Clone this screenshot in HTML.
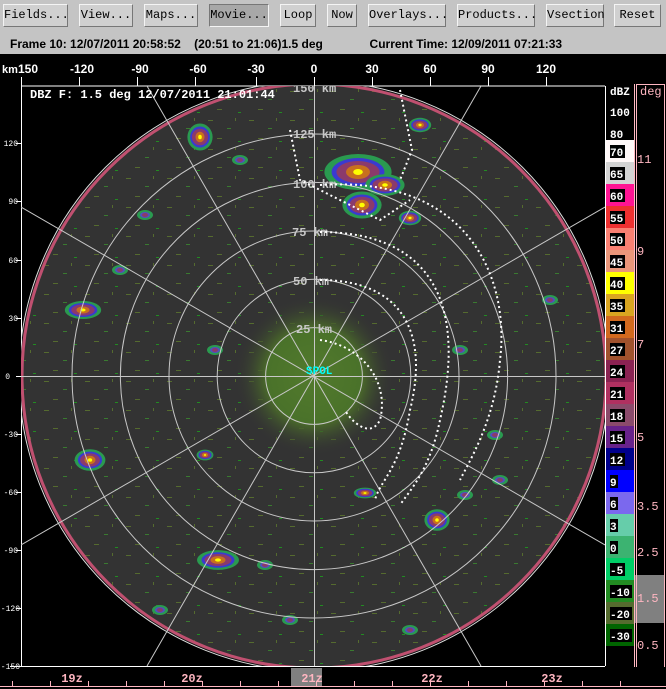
<!DOCTYPE html>
<html><head><meta charset="utf-8"><style>
body{margin:0;width:666px;height:689px;overflow:hidden;background:#000;font-family:"Liberation Sans",sans-serif}
#top{position:absolute;left:0;top:0;width:666px;height:54px;background:#c4c4c4}
.b{position:absolute;top:4px;height:23px;background:#d0d0d0;border:1px solid #f4f4f4;border-right-color:#777;border-bottom-color:#777;box-sizing:border-box;font:12px "Liberation Mono",monospace;line-height:21px;text-align:center;color:#000}
.b.p{background:#a8a8a8;border-color:#777 #f4f4f4 #f4f4f4 #777}
#info{position:absolute;top:37px;left:10px;font:bold 12px "Liberation Sans",sans-serif;white-space:pre;color:#000}
svg{position:absolute;left:0;top:0}
</style></head><body>
<div id="top">
<div class="b" style="left:3px;width:65px">Fields...</div>
<div class="b" style="left:79px;width:54px">View...</div>
<div class="b" style="left:144px;width:54px">Maps...</div>
<div class="b p" style="left:209px;width:60px">Movie...</div>
<div class="b" style="left:280px;width:36px">Loop</div>
<div class="b" style="left:327px;width:30px">Now</div>
<div class="b" style="left:368px;width:78px">Overlays...</div>
<div class="b" style="left:457px;width:78px">Products...</div>
<div class="b" style="left:546px;width:58px">Vsection</div>
<div class="b" style="left:614px;width:47px">Reset</div>
<div id="info">Frame 10: 12/07/2011 20:58:52    (20:51 to 21:06)1.5 deg              Current Time: 12/09/2011 07:21:33</div>
</div>
<svg width="666" height="689" viewBox="0 0 666 689" style="top:0">
<defs>
<clipPath id="fr"><rect x="21" y="86" width="584" height="580"/></clipPath>
<clipPath id="cc"><circle cx="314" cy="376" r="292"/></clipPath>
<pattern id="sp" width="41" height="29" patternUnits="userSpaceOnUse">
<rect x="3" y="4" width="5" height="1" fill="#556b2f"/><rect x="22" y="12" width="4" height="1" fill="#3a7a30"/><rect x="12" y="22" width="5" height="1" fill="#556b2f"/><rect x="33" y="25" width="3" height="1" fill="#228b22"/><rect x="30" y="2" width="1" height="3" fill="#556b2f"/>
</pattern>
<radialGradient id="cg"><stop offset="0" stop-color="#5a7a30"/><stop offset="0.6" stop-color="#4a6a2a"/><stop offset="1" stop-color="#333" stop-opacity="0"/></radialGradient>
<g id="bl">
<ellipse rx="14" ry="9" fill="#2a9a50"/>
<ellipse rx="11" ry="7" fill="#3a3ad0"/>
<ellipse rx="9" ry="5.5" fill="#8b3a6b"/>
<ellipse rx="5" ry="3.5" fill="#c8701e"/>
<ellipse rx="2" ry="1.5" fill="#ffff00"/>
</g>
<g id="sm">
<ellipse rx="8" ry="5" fill="#2a9a50"/>
<ellipse rx="5" ry="3" fill="#5050c0"/>
<ellipse rx="3" ry="2" fill="#8b3a6b"/>
</g>
</defs>
<g fill="#fff" font-family="Liberation Sans" font-weight="bold" font-size="12" text-anchor="middle">
<text x="10" y="73" font-size="11">km</text>
<text x="28" y="73">150</text><text x="82" y="73">-120</text><text x="140" y="73">-90</text><text x="198" y="73">-60</text><text x="256" y="73">-30</text><text x="314" y="73">0</text><text x="372" y="73">30</text><text x="430" y="73">60</text><text x="488" y="73">90</text><text x="546" y="73">120</text>
</g>
<g stroke="#fff" stroke-width="1">
<line x1="21" y1="86" x2="605" y2="86"/><line x1="21.5" y1="77" x2="21.5" y2="666"/><line x1="605.5" y1="86" x2="605.5" y2="666"/><line x1="10" y1="666.5" x2="605" y2="666.5"/>
<line x1="79.5" y1="77" x2="79.5" y2="86"/><line x1="137.5" y1="77" x2="137.5" y2="86"/><line x1="195.5" y1="77" x2="195.5" y2="86"/><line x1="256.5" y1="77" x2="256.5" y2="86"/><line x1="314.5" y1="77" x2="314.5" y2="86"/><line x1="372.5" y1="77" x2="372.5" y2="86"/><line x1="430.5" y1="77" x2="430.5" y2="86"/><line x1="488.5" y1="77" x2="488.5" y2="86"/><line x1="546.5" y1="77" x2="546.5" y2="86"/>
<line x1="16" y1="143.5" x2="21" y2="143.5"/><line x1="16" y1="201.5" x2="21" y2="201.5"/><line x1="16" y1="260.5" x2="21" y2="260.5"/><line x1="16" y1="318.5" x2="21" y2="318.5"/><line x1="16" y1="376.5" x2="21" y2="376.5"/><line x1="16" y1="434.5" x2="21" y2="434.5"/><line x1="16" y1="492.5" x2="21" y2="492.5"/><line x1="16" y1="550.5" x2="21" y2="550.5"/><line x1="16" y1="608.5" x2="21" y2="608.5"/>
</g>
<g fill="#fff" font-family="Liberation Mono" font-size="8" text-anchor="end">
<text x="18" y="146">120</text><text x="18" y="204">90</text><text x="18" y="263">60</text><text x="18" y="321">30</text><text x="10" y="379">0</text><text x="18" y="437">-30</text><text x="18" y="495">-60</text><text x="18" y="553">-90</text><text x="20" y="611">-120</text><text x="20" y="669">-150</text>
</g>
<g clip-path="url(#fr)">
<circle cx="314" cy="376" r="294" fill="#333"/>
<circle cx="314" cy="376" r="292" fill="url(#sp)"/>
<circle cx="314" cy="376" r="292" fill="none" stroke="#c05070" stroke-width="3"/>
<circle cx="314" cy="376" r="295" fill="none" stroke="#ddd" stroke-width="1"/>
<circle cx="314" cy="376" r="80" fill="url(#cg)"/>
<circle cx="314" cy="376" r="48" fill="#4a7a2a" opacity="0.5"/>
<use href="#bl" transform="translate(358,172) scale(2.4,2)"/>
<use href="#bl" transform="translate(385,185) scale(1.4,1.2)"/>
<use href="#bl" transform="translate(362,205) scale(1.4,1.5)"/>
<use href="#bl" transform="translate(200,137) scale(0.9,1.5)"/>
<use href="#bl" transform="translate(410,218) scale(0.8)"/>
<use href="#bl" transform="translate(83,310) scale(1.3,1)"/>
<use href="#bl" transform="translate(90,460) scale(1.1,1.2)"/>
<use href="#bl" transform="translate(218,560) scale(1.5,1.1)"/>
<use href="#bl" transform="translate(437,520) scale(0.9,1.2)"/>
<use href="#bl" transform="translate(365,493) scale(0.8,0.6)"/>
<use href="#bl" transform="translate(205,455) scale(0.6)"/>
<use href="#bl" transform="translate(420,125) scale(0.8)"/>
<use href="#sm" transform="translate(145,215)"/><use href="#sm" transform="translate(120,270)"/><use href="#sm" transform="translate(215,350)"/><use href="#sm" transform="translate(460,350)"/><use href="#sm" transform="translate(495,435)"/><use href="#sm" transform="translate(550,300)"/><use href="#sm" transform="translate(410,630)"/><use href="#sm" transform="translate(290,620)"/><use href="#sm" transform="translate(160,610)"/><use href="#sm" transform="translate(240,160)"/><use href="#sm" transform="translate(500,480)"/><use href="#sm" transform="translate(265,565)"/><use href="#sm" transform="translate(465,495)"/>
<g fill="none" stroke="#c8c8c8" stroke-width="1">
<circle cx="314" cy="376" r="48.4"/><circle cx="314" cy="376" r="96.8"/><circle cx="314" cy="376" r="145"/><circle cx="314" cy="376" r="193.6"/><circle cx="314" cy="376" r="242"/>
<line x1="314.5" y1="86" x2="314.5" y2="666"/><line x1="21" y1="376.5" x2="605" y2="376.5"/>
<line x1="147" y1="86" x2="481" y2="666"/><line x1="481" y1="86" x2="147" y2="666"/>
<line x1="21" y1="207" x2="605" y2="545"/><line x1="21" y1="545" x2="605" y2="207"/>
</g>
<g fill="#c8c8c8" font-family="Liberation Mono" font-size="12" font-weight="bold">
<text x="296" y="333">25 km</text><text x="293" y="285">50 km</text><text x="292" y="236">75 km</text><text x="293" y="188">100 km</text><text x="293" y="138">125 km</text><text x="293" y="92">150 km</text>
</g>
<g fill="none" stroke="#fff" stroke-width="2" stroke-dasharray="2 3">
<path d="M320 340 C360 345 390 380 380 420 C370 440 350 420 345 410"/>
<path d="M320 280 C400 280 430 330 410 410 C400 470 380 480 375 500"/>
<path d="M320 232 C420 232 470 290 440 420 C430 470 410 490 400 505"/>
<path d="M320 185 C470 175 510 280 500 360 C495 420 470 460 460 480"/>
<path d="M290 130 L300 180 L380 220 L410 200"/>
<path d="M400 90 L412 150 L400 180"/>
</g>
<text x="306" y="374" fill="#00ffff" font-family="Liberation Mono" font-weight="bold" font-size="11">SPOL</text>
</g>
<text x="30" y="98" fill="#fff" font-family="Liberation Mono" font-weight="bold" font-size="12">DBZ F: 1.5 deg 12/07/2011 21:01:44</text>
<g>
<rect x="606" y="140" width="28" height="22" fill="#fff8f8"/><rect x="606" y="162" width="28" height="22" fill="#d3d3d3"/><rect x="606" y="184" width="28" height="22" fill="#ff1493"/><rect x="606" y="206" width="28" height="22" fill="#ee3030"/><rect x="606" y="228" width="28" height="22" fill="#fa8072"/><rect x="606" y="250" width="28" height="22" fill="#e9967a"/><rect x="606" y="272" width="28" height="22" fill="#ffff00"/><rect x="606" y="294" width="28" height="22" fill="#daa520"/><rect x="606" y="316" width="28" height="22" fill="#d2691e"/><rect x="606" y="338" width="28" height="22" fill="#a0522d"/><rect x="606" y="360" width="28" height="22" fill="#8b2252"/><rect x="606" y="382" width="28" height="22" fill="#b03060"/><rect x="606" y="404" width="28" height="22" fill="#8b4a6b"/><rect x="606" y="426" width="28" height="22" fill="#68228b"/><rect x="606" y="448" width="28" height="22" fill="#00008b"/><rect x="606" y="470" width="28" height="22" fill="#0000ff"/><rect x="606" y="492" width="28" height="22" fill="#7b68ee"/><rect x="606" y="514" width="28" height="22" fill="#66cdaa"/><rect x="606" y="536" width="28" height="22" fill="#3cb371"/><rect x="606" y="558" width="28" height="22" fill="#00cd66"/><rect x="606" y="580" width="28" height="22" fill="#228b22"/><rect x="606" y="602" width="28" height="22" fill="#556b2f"/><rect x="606" y="624" width="28" height="22" fill="#006400"/>
</g>
<g fill="#000">
<rect x="610" y="145" width="15" height="13"/><rect x="610" y="167" width="15" height="13"/><rect x="610" y="189" width="15" height="13"/><rect x="610" y="211" width="15" height="13"/><rect x="610" y="233" width="15" height="13"/><rect x="610" y="255" width="15" height="13"/><rect x="610" y="277" width="15" height="13"/><rect x="610" y="299" width="15" height="13"/><rect x="610" y="321" width="15" height="13"/><rect x="610" y="343" width="15" height="13"/><rect x="610" y="365" width="15" height="13"/><rect x="610" y="387" width="15" height="13"/><rect x="610" y="409" width="15" height="13"/><rect x="610" y="431" width="15" height="13"/><rect x="610" y="453" width="15" height="13"/><rect x="610" y="475" width="8" height="13"/><rect x="610" y="497" width="8" height="13"/><rect x="610" y="519" width="8" height="13"/><rect x="610" y="541" width="8" height="13"/><rect x="610" y="563" width="15" height="13"/><rect x="610" y="585" width="22" height="13"/><rect x="610" y="607" width="22" height="13"/><rect x="610" y="629" width="22" height="13"/>
</g>
<g fill="#fff" font-family="Liberation Mono" font-weight="bold" font-size="11">
<text x="610" y="95">dBZ</text><text x="610" y="116">100</text><text x="610" y="138">80</text>
<text x="610" y="156">70</text><text x="610" y="178">65</text><text x="610" y="200">60</text><text x="610" y="222">55</text><text x="610" y="244">50</text><text x="610" y="266">45</text><text x="610" y="288">40</text><text x="610" y="310">35</text><text x="610" y="332">31</text><text x="610" y="354">27</text><text x="610" y="376">24</text><text x="610" y="398">21</text><text x="610" y="420">18</text><text x="610" y="442">15</text><text x="610" y="464">12</text><text x="610" y="486">9</text><text x="610" y="508">6</text><text x="610" y="530">3</text><text x="610" y="552">0</text><text x="610" y="574">-5</text><text x="610" y="596">-10</text><text x="610" y="618">-20</text><text x="610" y="640">-30</text>
</g>
<rect x="635" y="575" width="30" height="48" fill="#808080"/>
<g stroke="#ffb6c1" stroke-width="1" fill="none">
<line x1="634.5" y1="84" x2="634.5" y2="667"/><line x1="636.5" y1="84" x2="636.5" y2="667"/><line x1="664.5" y1="84" x2="664.5" y2="667"/><line x1="636" y1="84.5" x2="665" y2="84.5"/>
<line x1="0" y1="686.5" x2="666" y2="686.5"/>
</g>
<g fill="#ffb6c1" font-family="Liberation Mono" font-size="12">
<text x="640" y="95">deg</text><text x="637" y="163">11</text><text x="637" y="255">9</text><text x="637" y="348">7</text><text x="637" y="441">5</text><text x="637" y="510">3.5</text><text x="637" y="556">2.5</text><text x="637" y="602">1.5</text><text x="637" y="649">0.5</text>
</g>
<rect x="291" y="668" width="31" height="18" fill="#808080"/>
<g fill="#ffb6c1" font-family="Liberation Mono" font-weight="bold" font-size="12" text-anchor="middle">
<text x="72" y="682">19z</text><text x="192" y="682">20z</text><text x="312" y="682">21z</text><text x="432" y="682">22z</text><text x="552" y="682">23z</text>
</g>
<g stroke="#ffb6c1">
<line x1="12.5" y1="681" x2="12.5" y2="687"/><line x1="50.5" y1="681" x2="50.5" y2="687"/><line x1="88.5" y1="681" x2="88.5" y2="687"/><line x1="126.5" y1="681" x2="126.5" y2="687"/><line x1="164.5" y1="681" x2="164.5" y2="687"/><line x1="202.5" y1="681" x2="202.5" y2="687"/><line x1="240.5" y1="681" x2="240.5" y2="687"/><line x1="278.5" y1="681" x2="278.5" y2="687"/><line x1="316.5" y1="681" x2="316.5" y2="687"/><line x1="354.5" y1="681" x2="354.5" y2="687"/><line x1="392.5" y1="681" x2="392.5" y2="687"/><line x1="430.5" y1="681" x2="430.5" y2="687"/><line x1="468.5" y1="681" x2="468.5" y2="687"/><line x1="506.5" y1="681" x2="506.5" y2="687"/><line x1="544.5" y1="681" x2="544.5" y2="687"/><line x1="582.5" y1="681" x2="582.5" y2="687"/><line x1="620.5" y1="681" x2="620.5" y2="687"/>
</g>
</svg>
</body></html>
